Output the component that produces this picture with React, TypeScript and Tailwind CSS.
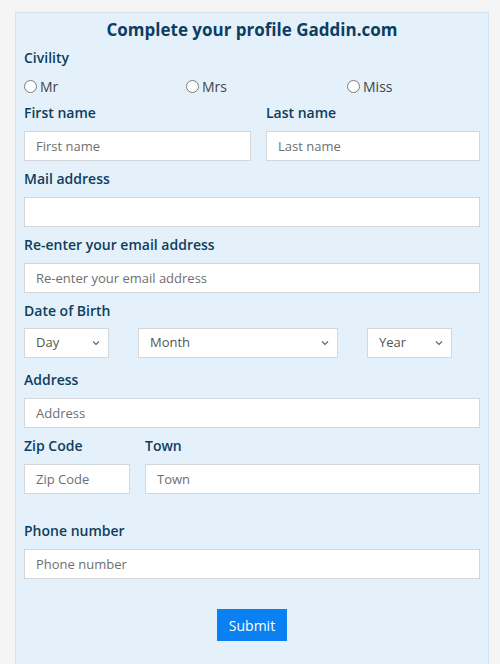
const font = { fontFamily: '"Open Sans", "Liberation Sans", sans-serif' };

const labelCls = "block h-[20px] text-[14px] font-semibold leading-[20px] text-[#0f3d5c]";
const inputCls =
  "block h-[30px] w-full border border-[#d4d8db] bg-white px-[11px] text-[13px] text-[#333] outline-none placeholder:text-[#6f6f6f]";

function Field({ label, placeholder, className = "" }: { label: string; placeholder?: string; className?: string }) {
  return (
    <div className={className}>
      <label className={labelCls}>{label}</label>
      <input className={`${inputCls} mt-[8px]`} placeholder={placeholder} />
    </div>
  );
}

function Radio({ label, className = "" }: { label: string; className?: string }) {
  return (
    <label className={`flex h-[20px] items-center ${className}`}>
      <span className="block h-[13px] w-[13px] rounded-full border border-[#7a7a7a] bg-white" />
      <span className="ml-[3px] text-[14px] text-[#444]">{label}</span>
    </label>
  );
}

function Select({ label, className = "" }: { label: string; className?: string }) {
  return (
    <div className={`relative h-[30px] ${className}`}>
      <select className="block h-full w-full appearance-none border border-[#d4d8db] bg-white pl-[11px] text-[13px] text-[#555] outline-none">
        <option>{label}</option>
      </select>
      <svg
        className="pointer-events-none absolute right-[9px] top-[12px]"
        width="8"
        height="6"
        viewBox="0 0 8 6"
        fill="none"
        stroke="#666"
        strokeWidth="1.2"
      >
        <path d="M1 1.5 4 4.5 7 1.5" />
      </svg>
    </div>
  );
}

export default function App() {
  return (
    <div className="min-h-[664px] w-full overflow-hidden bg-[#f6f5f5] pt-[12px]" style={font}>
      <form className="ml-[15px] min-h-[660px] w-[474px] border border-[#d5e3ee] bg-[#e4f1fb] px-[8px] pt-[5px]">
        <h1 className="h-[24px] text-center text-[17px] font-bold leading-[24px] text-[#0d3e60]">
          Complete your profile Gaddin.com
        </h1>

        <div className="mt-[6px]">
          <span className={labelCls}>Civility</span>
          <div className="mt-[8px] flex">
            <Radio label="Mr" className="w-[162px]" />
            <Radio label="Mrs" className="w-[161px]" />
            <Radio label="Miss" />
          </div>
        </div>

        <div className="mt-[7px] flex gap-[15px]">
          <Field label="First name" placeholder="First name" className="w-[227px]" />
          <Field label="Last name" placeholder="Last name" className="flex-1" />
        </div>

        <Field label="Mail address" className="mt-[8px]" />
        <Field label="Re-enter your email address" placeholder="Re-enter your email address" className="mt-[8px]" />

        <div className="mt-[8px]">
          <span className={labelCls}>Date of Birth</span>
          <div className="mt-[7px] flex gap-[29px]">
            <Select label="Day" className="w-[85px]" />
            <Select label="Month" className="w-[200px]" />
            <Select label="Year" className="w-[85px]" />
          </div>
        </div>

        <Field label="Address" placeholder="Address" className="mt-[12px]" />

        <div className="mt-[8px] flex gap-[15px]">
          <Field label="Zip Code" placeholder="Zip Code" className="w-[106px]" />
          <Field label="Town" placeholder="Town" className="flex-1" />
        </div>

        <Field label="Phone number" placeholder="Phone number" className="mt-[27px]" />

        <div className="mt-[30px] flex justify-center">
          <button
            type="button"
            className="h-[32px] w-[70px] bg-[#0b80f3] text-[14px] text-white"
          >
            Submit
          </button>
        </div>
      </form>
    </div>
  );
}
